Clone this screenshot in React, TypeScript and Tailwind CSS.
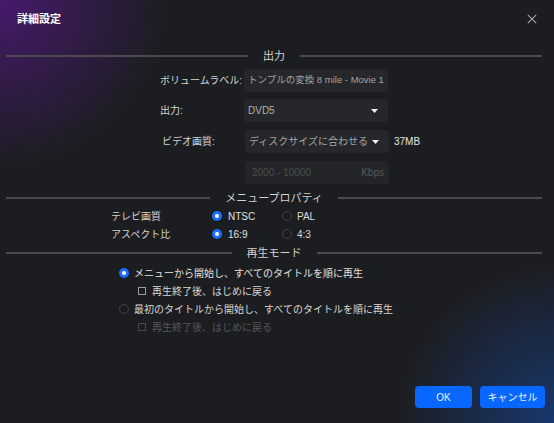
import React from "react";

function Divider({ label }: { label: string }) {
  return (
    <div className="flex items-center h-[14px] pl-[6px] pr-[12px]">
      <div className="flex-1 h-[1.5px] bg-[#4b4b4f]" />
      <span className="px-[15px] text-[11px] leading-[14px] text-[#d2d2d2] whitespace-nowrap">{label}</span>
      <div className="flex-1 h-[1.5px] bg-[#4b4b4f]" />
    </div>
  );
}

function Radio({ checked }: { checked?: boolean }) {
  return checked ? (
    <span className="w-[10px] h-[10px] rounded-full bg-[#1a6dff] flex items-center justify-center shrink-0">
      <span className="w-[4px] h-[4px] rounded-full bg-white" />
    </span>
  ) : (
    <span className="w-[10px] h-[10px] rounded-full border border-[#434347] bg-[#1b1c1f] shrink-0" />
  );
}

function Caret() {
  return (
    <svg width="7" height="4" viewBox="0 0 7 4" className="shrink-0">
      <path d="M0 0 H7 L3.5 4 Z" fill="#f0f0f0" />
    </svg>
  );
}

function Check({ dim }: { dim?: boolean }) {
  return (
    <span
      className={
        dim
          ? "w-[8px] h-[8px] border border-[#4a4a4d] shrink-0"
          : "w-[8px] h-[8px] border border-[#9a9a9a] shrink-0"
      }
    />
  );
}

export default function App() {
  return (
    <div className="w-[554px] h-[423px] overflow-hidden flex flex-col bg-[#1c1d20] [background-image:radial-gradient(circle_at_0%_0%,rgba(72,26,112,0.95),rgba(72,26,112,0)_170px),radial-gradient(circle_at_100%_100%,rgba(24,58,118,0.9),rgba(24,58,118,0)_160px)] font-['Liberation_Sans','Noto_Sans_CJK_JP',sans-serif] text-[10px] text-[#d4d4d4]">
      {/* header */}
      <div className="h-[38px] flex items-center justify-between pl-[17px] pr-[17px]">
        <span className="text-[11px] font-bold text-white leading-none">詳細設定</span>
        <svg width="10" height="10" viewBox="0 0 10 10">
          <path d="M0.8 0.8 L9.2 9.2 M9.2 0.8 L0.8 9.2" stroke="#a8a8a8" strokeWidth="1.1" />
        </svg>
      </div>

      <div className="mt-[11px]">
        <Divider label="出力" />
      </div>

      {/* form rows */}
      <div className="flex items-center h-[23px] mt-[6px] pl-[160px]">
        <span className="w-[84px] whitespace-nowrap">ボリュームラベル:</span>
        <div className="w-[144px] h-[23px] rounded-[4px] bg-[#26272a] flex items-center overflow-hidden pl-[4px] text-[9.5px] text-[#a3a3a3] whitespace-nowrap">
          トンプルの変換 8 mile - Movie 1
        </div>
      </div>
      <div className="flex items-center h-[23px] mt-[7px] pl-[160px]">
        <span className="w-[84px]">出力:</span>
        <div className="w-[144px] h-[23px] rounded-[4px] bg-[#26272a] flex items-center justify-between pl-[4px] pr-[10px] text-[#b0b0b0]">
          <span>DVD5</span>
          <Caret />
        </div>
      </div>
      <div className="flex items-center h-[23px] mt-[8px] pl-[162px]">
        <span className="w-[83px]">ビデオ画質:</span>
        <div className="w-[144px] h-[23px] rounded-[4px] bg-[#26272a] flex items-center justify-between pl-[4px] pr-[10px] text-[#a3a3a3]">
          <span className="whitespace-nowrap">ディスクサイズに合わせる</span>
          <Caret />
        </div>
        <span className="ml-[5px] text-[#e6e6e6]">37MB</span>
      </div>
      <div className="flex items-center h-[23px] mt-[8px] pl-[245px]">
        <div className="w-[144px] h-[23px] rounded-[4px] bg-[#242528] flex items-center justify-between pl-[7px] pr-[5px] text-[#4c4d50]">
          <span>2000 - 10000</span>
          <span className="text-[#58595c]">Kbps</span>
        </div>
      </div>

      <div className="mt-[7px]">
        <Divider label="メニュープロパティ" />
      </div>

      <div className="mt-[2px] flex items-center h-[18px] pl-[111px]">
        <span className="w-[101px]">テレビ画質</span>
        <div className="w-[70px] flex items-center gap-[6px]">
          <Radio checked />
          <span className="text-[#e2e2e2]">NTSC</span>
        </div>
        <div className="flex items-center gap-[5px]">
          <Radio />
          <span className="text-[#d8d8d8]">PAL</span>
        </div>
      </div>
      <div className="flex items-center h-[18px] pl-[111px]">
        <span className="w-[101px]">アスペクト比</span>
        <div className="w-[70px] flex items-center gap-[6px]">
          <Radio checked />
          <span className="text-[#e2e2e2]">16:9</span>
        </div>
        <div className="flex items-center gap-[5px]">
          <Radio />
          <span className="text-[#d8d8d8]">4:3</span>
        </div>
      </div>

      <div className="mt-[3px]">
        <Divider label="再生モード" />
      </div>

      <div className="mt-[4px] flex items-center h-[18px] pl-[119px] gap-[5px]">
        <Radio checked />
        <span className="text-[#e0e0e0]">メニューから開始し、すべてのタイトルを順に再生</span>
      </div>
      <div className="flex items-center h-[18px] pl-[138px] gap-[6px]">
        <Check />
        <span className="text-[#d6d6d6]">再生終了後、はじめに戻る</span>
      </div>
      <div className="flex items-center h-[18px] pl-[119px] gap-[5px]">
        <Radio />
        <span className="text-[#d6d6d6]">最初のタイトルから開始し、すべてのタイトルを順に再生</span>
      </div>
      <div className="flex items-center h-[18px] pl-[138px] gap-[6px]">
        <Check dim />
        <span className="text-[#55565a]">再生終了後、はじめに戻る</span>
      </div>

      <div className="mt-auto mb-[15px] flex justify-end gap-[8px] pr-[9px]">
        <button className="w-[57px] h-[22px] rounded-[4px] bg-[#0867ff] text-[#eef3ff] text-[10px]">OK</button>
        <button className="w-[65px] h-[22px] rounded-[4px] bg-[#0867ff] text-[#eef3ff] text-[10px]">キャンセル</button>
      </div>
    </div>
  );
}
